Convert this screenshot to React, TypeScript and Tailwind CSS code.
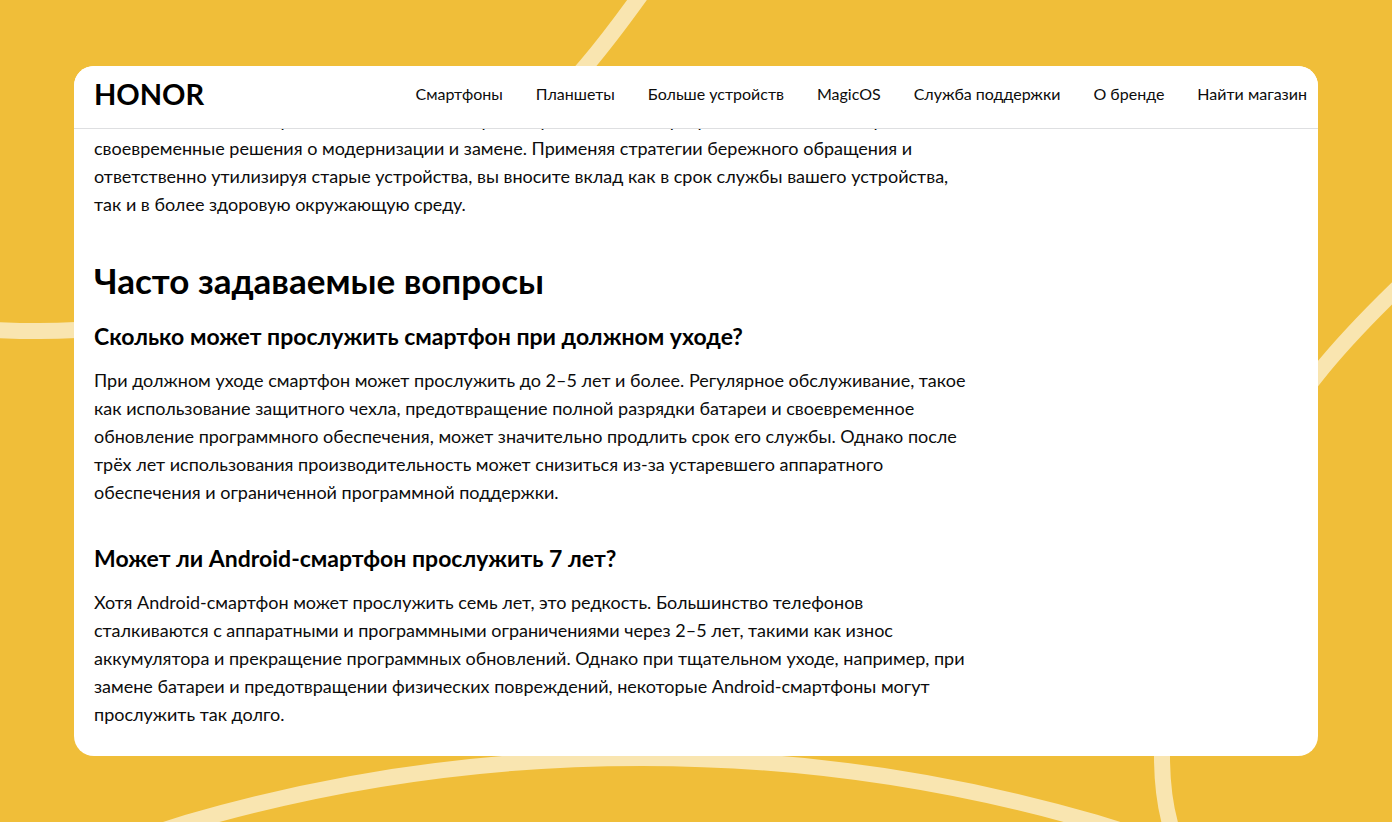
const links = [
  "Смартфоны",
  "Планшеты",
  "Больше устройств",
  "MagicOS",
  "Служба поддержки",
  "О бренде",
  "Найти магазин",
];

const intro = [
  "Понимание этапов старения компонентов и экрана и узлов а также программ позволит вам принимать",
  "своевременные решения о модернизации и замене. Применяя стратегии бережного обращения и",
  "ответственно утилизируя старые устройства, вы вносите вклад как в срок службы вашего устройства,",
  "так и в более здоровую окружающую среду.",
];

const faq = [
  {
    question: "Сколько может прослужить смартфон при должном уходе?",
    answer: [
      "При должном уходе смартфон может прослужить до 2–5 лет и более. Регулярное обслуживание, такое",
      "как использование защитного чехла, предотвращение полной разрядки батареи и своевременное",
      "обновление программного обеспечения, может значительно продлить срок его службы. Однако после",
      "трёх лет использования производительность может снизиться из-за устаревшего аппаратного",
      "обеспечения и ограниченной программной поддержки.",
    ],
  },
  {
    question: "Может ли Android-смартфон прослужить 7 лет?",
    answer: [
      "Хотя Android-смартфон может прослужить семь лет, это редкость. Большинство телефонов",
      "сталкиваются с аппаратными и программными ограничениями через 2–5 лет, такими как износ",
      "аккумулятора и прекращение программных обновлений. Однако при тщательном уходе, например, при",
      "замене батареи и предотвращении физических повреждений, некоторые Android-смартфоны могут",
      "прослужить так долго.",
    ],
  },
];

function Lines({ lines }: { lines: string[] }) {
  return (
    <>
      {lines.map((line) => (
        <span key={line} className="block">
          {line}
        </span>
      ))}
    </>
  );
}

function Backdrop() {
  return (
    <svg
      className="absolute inset-0 h-full w-full"
      viewBox="0 0 1392 822"
      preserveAspectRatio="xMidYMid slice"
      fill="none"
      stroke="#f9e5b0"
      strokeWidth="16"
      aria-hidden="true"
    >
      <path d="M-20 329 C10 331 45 332 76 330 C270 316 440 240 586 66 Q613 34 647 -14" />
      <path d="M142 837 L188 822.5 A1624 1624 0 0 1 1095 822.5 L1142 837" />
      <path d="M1176 842 Q1162 806 1162 756 C1162 620 1220 495 1316 376 Q1350 333 1410 276" />
    </svg>
  );
}

export default function App() {
  return (
    <div className="relative min-h-screen bg-[#f0be39] px-[74px] py-[66px] font-['Lato','Noto_Sans',sans-serif] text-[#0c0c0c]">
      <Backdrop />
      <div className="relative overflow-hidden rounded-[20px] bg-white">
        <header className="relative z-10 flex items-center justify-between border-b border-[#dedfe1] bg-white pr-[11px] pb-[6px] pl-5">
          <a href="#home" className="text-[29px] leading-[56px] font-bold text-black">
            HONOR
          </a>
          <nav className="flex gap-[33px] text-base leading-[56px] whitespace-nowrap">
            {links.map((link) => (
              <a key={link} href="#menu">
                {link}
              </a>
            ))}
          </nav>
        </header>
        <main className="-mt-[23px] px-5 pb-7 text-lg leading-7 whitespace-nowrap">
          <p>
            <Lines lines={intro} />
          </p>
          <h1 className="mt-[38px] text-[35px] leading-[48px] font-bold text-black">Часто задаваемые вопросы</h1>
          {faq.map((item, index) => (
            <section key={item.question} className={index === 0 ? "mt-4" : "mt-9"}>
              <h2 className="text-[23px] leading-8 font-bold text-black">{item.question}</h2>
              <p className="mt-[14px]">
                <Lines lines={item.answer} />
              </p>
            </section>
          ))}
        </main>
      </div>
    </div>
  );
}
